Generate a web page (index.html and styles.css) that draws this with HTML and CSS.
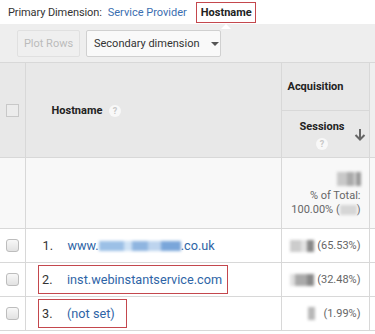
FILE: index.html
```html
<!DOCTYPE html>
<html>
<head>
<meta charset="utf-8">
<link rel="stylesheet" href="styles.css">
</head>
<body>
<div class="primary">
  <span class="label">Primary Dimension:</span>
  <a class="dim-link">Service Provider</a>
  <span class="dim-active">Hostname<span class="notch"></span></span>
</div>
<div class="toolbar">
  <button class="btn btn-disabled">Plot Rows</button>
  <button class="btn btn-select">Secondary dimension <span class="caret"></span></button>
</div>
<table class="report">
  <colgroup>
    <col class="c-check">
    <col class="c-host">
    <col class="c-sess">
    <col class="c-extra">
  </colgroup>
  <thead>
    <tr class="h1">
      <th rowspan="2" class="th-check"><span class="cb cb-head"></span></th>
      <th rowspan="2" class="th-host">Hostname <span class="help">?</span></th>
      <th class="th-group">Acquisition</th>
      <th rowspan="2" class="th-extra"></th>
    </tr>
    <tr class="h2">
      <th class="th-sess">
        <div class="sess-label">Sessions</div>
        <span class="help">?</span>
        <svg class="sort" width="12" height="14" viewBox="0 0 12 14"><path d="M6 1v10M1.5 7l4.5 4.5L10.5 7" fill="none" stroke="#666" stroke-width="2"/></svg>
      </th>
    </tr>
  </thead>
  <tbody>
    <tr class="totals">
      <td></td>
      <td></td>
      <td class="tot-cell">
        <div class="tot-val"><span class="blur b1"></span></div>
        <div>% of Total:</div>
        <div>100.00% (<span class="blur b2"></span>)</div>
      </td>
      <td></td>
    </tr>
    <tr class="row">
      <td class="td-check"><span class="cb"></span></td>
      <td class="td-host"><span class="num">1.</span><a class="host">www.<span class="blurlink"></span>.co.uk</a></td>
      <td class="td-val"><span class="blur b3"></span> (65.53%)</td>
      <td></td>
    </tr>
    <tr class="row">
      <td class="td-check"><span class="cb"></span></td>
      <td class="td-host"><span class="hl hl-2"><span class="num">2.</span><a class="host">inst.webinstantservice.com</a></span></td>
      <td class="td-val"><span class="blur b4"></span> (32.48%)</td>
      <td></td>
    </tr>
    <tr class="row">
      <td class="td-check"><span class="cb"></span></td>
      <td class="td-host"><span class="hl hl-3"><span class="num">3.</span><a class="host">(not set)</a></span></td>
      <td class="td-val"><span class="blur b5"></span> &nbsp;&nbsp;(1.99%)</td>
      <td></td>
    </tr>
  </tbody>
</table>
</body>
</html>
```
FILE: styles.css
```css
html, body {
  margin: 0;
  padding: 0;
  overflow: hidden;
  background: #fff;
}
body {
  font-family: Roboto, "Liberation Sans", sans-serif;
  color: #222;
  width: 375px;
  height: 334px;
}
.primary {
  height: 24px;
  display: flex;
  align-items: center;
  padding-left: 8px;
  font-size: 11px;
  color: #333;
  white-space: nowrap;
}
.label { margin-right: 6px; letter-spacing: -0.1px; }
.dim-link { color: #3a6eb0; margin-right: 9px; }
.dim-active {
  position: relative;
  font-weight: bold;
  color: #222;
  border: 1.5px solid #c4474d;
  padding: 3px 3px 3px 4px;
  margin-top: 1px;
}
.notch {
  position: absolute;
  left: 24px;
  bottom: -7px;
  width: 0;
  height: 0;
  border-left: 5px solid transparent;
  border-right: 5px solid transparent;
  border-bottom: 5px solid #fff;
}
.toolbar {
  background: #eeeeee;
  height: 38px;
  box-sizing: border-box;
  padding: 6px 0 0 17px;
  display: flex;
  gap: 6px;
  align-items: flex-start;
}
.btn {
  height: 27px;
  font-family: inherit;
  font-size: 11px;
  border-radius: 2px;
  padding: 0;
  box-sizing: border-box;
  white-space: nowrap;
}
.btn-disabled {
  width: 63px;
  background: #efefef;
  border: 1px solid #e0e0e0;
  color: #bbb;
}
.btn-select {
  width: 135px;
  background: #f9f9f9;
  border: 1px solid #d0d0d0;
  color: #333;
  text-align: left;
  padding-left: 7px;
  display: flex;
  align-items: center;
}
.caret {
  display: inline-block;
  margin-left: 11px;
  border-left: 4px solid transparent;
  border-right: 4px solid transparent;
  border-top: 4px solid #555;
}
.report {
  border-collapse: collapse;
  table-layout: fixed;
  width: 375px;
  font-size: 11px;
}
.c-check { width: 25px; }
.c-host { width: 256px; }
.c-sess { width: 88px; }
.c-extra { width: 6px; }
.report th, .report td {
  border: 1px solid #d8d8d8;
  padding: 0;
}
.report tr > :first-child { border-left: none; }
.report tr > :last-child { border-right: none; }
thead th {
  background: #e8e8e8;
  font-weight: bold;
  color: #222;
  font-size: 11px;
}
.h1 { height: 48px; }
.h2 { height: 47px; }
.th-check { text-align: left; padding-left: 6px !important; }
.th-host { text-align: left; padding-left: 26px !important; }
.th-group { text-align: left; padding-left: 6px !important; white-space: nowrap; }
.th-extra { background: #efefef !important; }
.th-sess {
  position: relative;
  text-align: center;
  vertical-align: top;
  padding-top: 9px !important;
}
.sess-label { padding-right: 6px; margin-bottom: 4px; }
.th-sess .help { margin-left: -6px; }
.sort {
  position: absolute;
  right: 3px;
  top: 17px;
}
.help {
  display: inline-block;
  width: 12px;
  height: 12px;
  border-radius: 50%;
  background: #f8f8f8;
  color: #c8c8c8;
  font-size: 9px;
  line-height: 12px;
  text-align: center;
  font-weight: bold;
  margin-left: 4px;
  vertical-align: 0;
}
.cb {
  display: inline-block;
  width: 11px;
  height: 11px;
  border: 1px solid #bdbdbd;
  border-radius: 3px;
  background: linear-gradient(#f8f8f8, #e2e2e2);
  vertical-align: middle;
}
.cb-head {
  border-radius: 0;
  background: #ececec;
  border-color: #c8c8c8;
}
.totals { height: 71px; }
.totals td { background: #f8f8f8; }
.tot-cell {
  text-align: right;
  padding-right: 8px !important;
  padding-top: 2px !important;
  color: #666;
  font-size: 11px;
  line-height: 14px;
}
.tot-val { margin-bottom: 3px; }
.row { height: 34px; }
.td-check { padding-left: 6px !important; }
.td-host { padding-left: 17px !important; font-size: 12.7px; white-space: nowrap; }
.num { color: #333; display: inline-block; width: 25px; }
.host { color: #2e64a6; }
.hl {
  display: inline-flex;
  align-items: center;
  box-sizing: border-box;
  height: 29px;
  border: 1.5px solid #c4474d;
  padding-left: 3.5px;
  margin-left: -5px;
}
.hl-2 { width: 190px; }
.hl-3 { width: 89px; }
.td-val {
  text-align: right;
  padding-right: 8px !important;
  color: #666;
  font-size: 11px;
  white-space: nowrap;
}
.blur {
  display: inline-block;
  vertical-align: middle;
  filter: blur(1.5px);
}
.b1 { width: 24px; height: 14px; background: linear-gradient(90deg, #c8c8c8 0 40%, #aaa 40% 70%, #ddd 70% 80%, #999 80%); }
.b2 { width: 17px; height: 10px; background: #d6d6d6; }
.b3 { width: 24px; height: 12px; background: linear-gradient(90deg, #ccc 0 45%, #e2e2e2 45% 70%, #888 70%); }
.b4 { width: 24px; height: 12px; background: linear-gradient(90deg, #e0e0e0 0 20%, #aaa 20% 70%, #888 70%); }
.b5 { width: 7px; height: 13px; background: #b8b8b8; }
.blurlink {
  display: inline-block;
  width: 82px;
  height: 10px;
  vertical-align: -1px;
  background: linear-gradient(90deg, #9cc0e6 0 30%, #cfe2f5 30% 40%, #8fb5e0 40% 60%, #bdd4ee 60% 75%, #7aa6da 75%);
  filter: blur(1.8px);
}
```
